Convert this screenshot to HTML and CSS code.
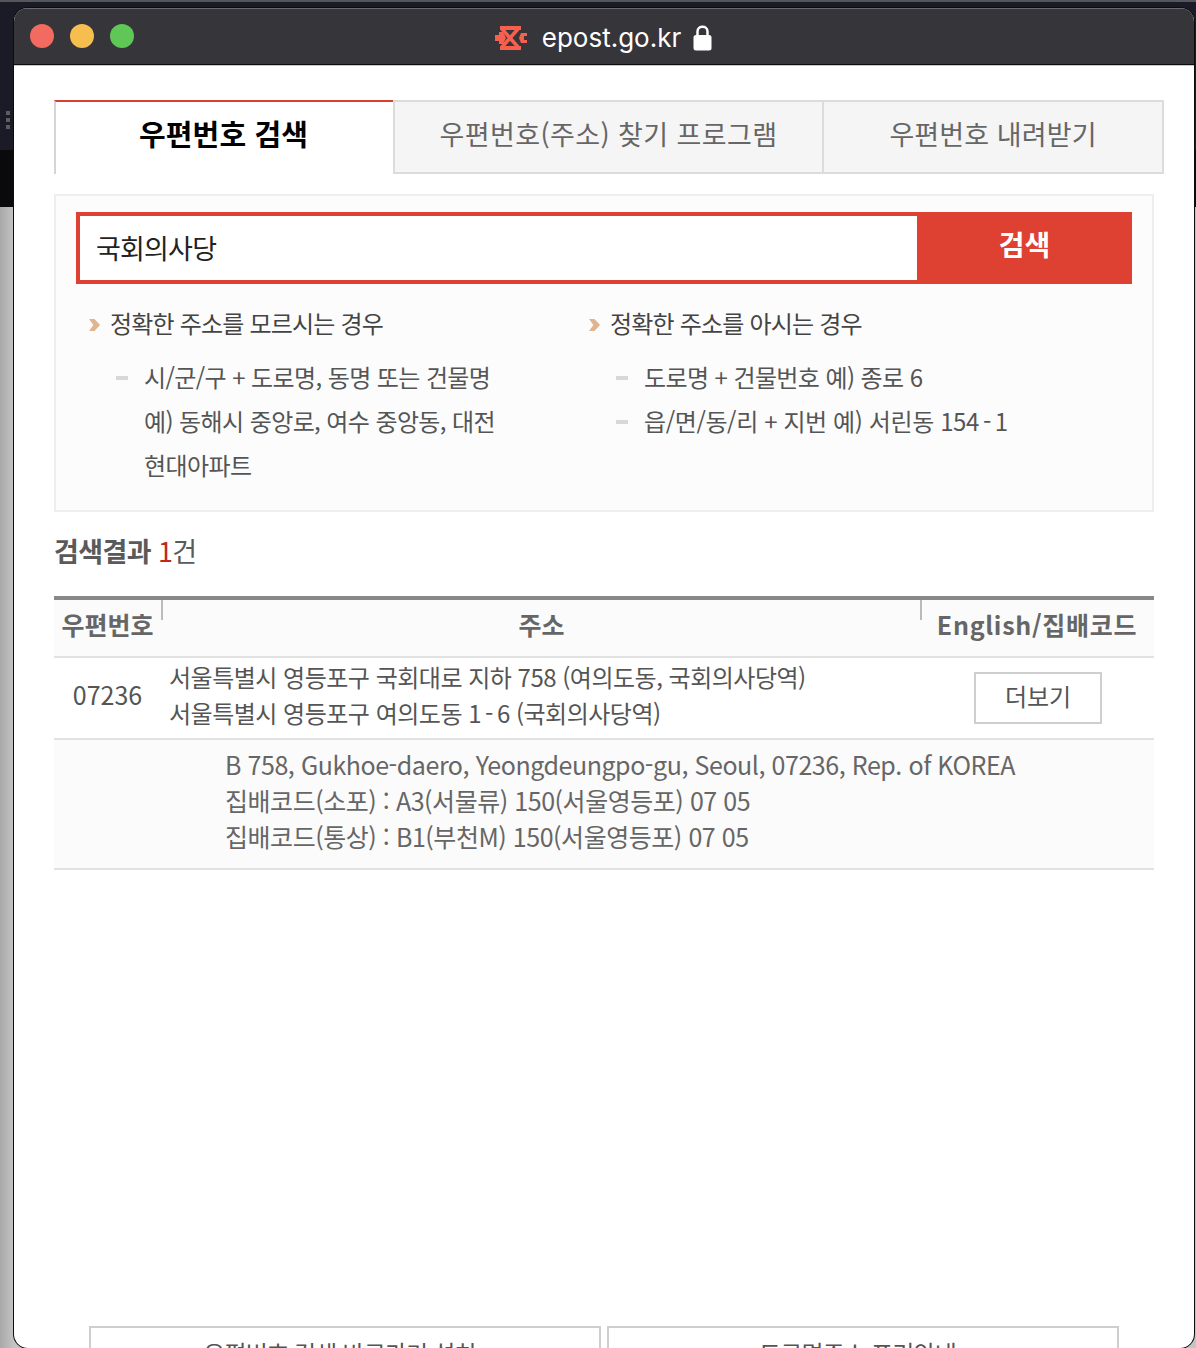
FILE: index.html
```html
<!DOCTYPE html>
<html lang="ko">
<head>
    <meta charset="UTF-8">
    <meta name="viewport" content="width=device-width, initial-scale=1.0">
    <title>epost.go.kr</title>
    <link rel="stylesheet" href="styles.css">
</head>
<body>
    <div class="desktop-top"></div>
    <div class="desktop-dots"><i></i><i></i><i></i></div>
    <div class="window">
        <div class="titlebar">
            <div class="lights">
                <span class="light red"></span>
                <span class="light yellow"></span>
                <span class="light green"></span>
            </div>
            <div class="site">
                <svg class="site-icon" width="32" height="24" viewBox="0 0 32 24">
                    <path fill="#f7604e" d="M5 0H26V4H5ZM5 20H26V24H5ZM0 9H6V15H0ZM26 7H32V10H29V14H32V17H26L24 12Z"/>
                    <path fill="none" stroke="#f7604e" stroke-width="3.500" d="M7 3L23 21M23 3L7 21"/>
                    <path fill="#f7604e" d="M4 6H8L11 12L8 18H4Z"/>
                </svg>
                <span class="site-name">epost.go.kr</span>
                <svg class="lock" width="19" height="27" viewBox="0 0 19 27">
                    <path fill="none" stroke="#fff" stroke-width="2.500" d="M4.500 12V7.500C4.500 1.200 14.500 1.200 14.500 7.500V12"/>
                    <rect x="0.500" y="11" width="18" height="15.500" rx="2.500" fill="#fff"/>
                </svg>
            </div>
        </div>

        <div class="content">
            <div class="tabs">
                <div class="tab active">우편번호 검색</div>
                <div class="tab second">우편번호(주소) 찾기 프로그램</div>
                <div class="tab third">우편번호 내려받기</div>
            </div>

            <div class="search-box">
                <div class="search">
                    <div class="search-input">국회의사당</div>
                    <div class="search-btn">검색</div>
                </div>
                <div class="tips">
                    <div class="tip-col">
                        <p class="tip-title">정확한 주소를 모르시는 경우</p>
                        <ul>
                            <li>시/군/구 + 도로명, 동명 또는 건물명<br>예) 동해시 중앙로, 여수 중앙동, 대전<br>현대아파트</li>
                        </ul>
                    </div>
                    <div class="tip-col">
                        <p class="tip-title">정확한 주소를 아시는 경우</p>
                        <ul>
                            <li>도로명 + 건물번호 예) 종로 6</li>
                            <li class="loose">읍/면/동/리 + 지번 예) 서린동 154<span class="dash">-</span>1</li>
                        </ul>
                    </div>
                </div>
            </div>

            <h2 class="result-title">검색결과 <em>1</em><span>건</span></h2>

            <div class="result">
                <div class="result-head">
                    <div class="col-zip">우편번호</div>
                    <div class="col-addr">주소</div>
                    <div class="col-more">English/집배코드</div>
                </div>
                <div class="result-row">
                    <div class="col-zip">07236</div>
                    <div class="col-addr">서울특별시 영등포구 국회대로 지하 758 (여의도동, 국회의사당역)<br>서울특별시 영등포구 여의도동 1<span class="dash">-</span>6 (국회의사당역)</div>
                    <div class="col-more"><span class="more-btn">더보기</span></div>
                </div>
                <div class="result-detail">B 758, Gukhoe-daero, Yeongdeungpo-gu, Seoul, 07236, Rep. of KOREA<br>집배코드(소포) : A3(서물류) 150(서울영등포) 07 05<br>집배코드(통상) : B1(부천M) 150(서울영등포) 07 05</div>
            </div>

            <div class="bottom-links">
                <div class="bottom-link">우편번호 검색 바로가기 설치</div>
                <div class="bottom-link">도로명주소 프리안내</div>
            </div>
        </div>
    </div>
</body>
</html>
```

FILE: styles.css
```css
html, body {
    margin: 0;
    padding: 0;
    height: 1348px;
    overflow: hidden;
}
body {
    position: relative;
    font-family: "Noto Sans CJK KR", "Noto Sans", sans-serif;
    background: linear-gradient(90deg, #a8a8a8, #c4c4c4 14px);
    color: #555;
}
.desktop-top {
    position: absolute;
    top: 0;
    left: 0;
    right: 0;
    height: 207px;
    background: linear-gradient(#1b1b27 0, #1b1b27 148px, #0a0a0d 148px);
    border-top: 2px solid #55555c;
    box-sizing: border-box;
}
.desktop-dots {
    position: absolute;
    top: 111px;
    left: 6px;
    display: flex;
    flex-direction: column;
    gap: 3px;
}
.desktop-dots i {
    display: block;
    width: 4px;
    height: 4px;
    background: #5d5d63;
}
.window {
    position: relative;
    margin: 8px 2px 0 14px;
    height: 1340px;
    background: #fff;
    border-radius: 14px;
    box-shadow: 0 0 0 1px #0c0c10;
    overflow: hidden;
}
.titlebar {
    position: relative;
    box-sizing: border-box;
    height: 57px;
    background: #35353a;
    border-top: 1px solid #6a6a6e;
    border-bottom: 1px solid #0c0c10;
    box-shadow: 0 1px 0 #c9c9c9;
    display: flex;
    align-items: center;
    justify-content: center;
}
.lights {
    position: absolute;
    left: 16px;
    top: 15px;
    display: flex;
    gap: 16px;
}
.light {
    width: 24px;
    height: 24px;
    border-radius: 50%;
}
.red { background: #f26a60; }
.yellow { background: #f6bd4f; }
.green { background: #5fc755; }
.site {
    display: flex;
    align-items: center;
    margin-left: -1px;
    margin-top: 2px;
}
.site-icon { margin-right: 15px; }
.site-name {
    font-family: "Inter", "Liberation Sans", sans-serif;
    font-size: 26px;
    line-height: 32px;
    color: #fff;
    margin-right: 12px;
}
.content {
    padding: 35px 40px 0 40px;
}
.tabs {
    display: flex;
    width: 1110px;
    height: 74px;
}
.tab {
    box-sizing: border-box;
    background: #f5f5f5;
    border: 2px solid #dcdcdc;
    border-left: 0;
    text-align: center;
    font-size: 27px;
    line-height: 64px;
    color: #666;
}
.tab.active {
    width: 339px;
    padding-right: 2px;
    background: #fff;
    border: 0;
    border-top: 2px solid #d8402f;
    border-left: 2px solid #d5d5d5;
    color: #000;
    font-size: 29px;
    font-weight: 700;
    line-height: 62px;
    letter-spacing: 0.1px;
}
.tab.second {
    width: 431px;
    border-left: 2px solid #dcdcdc;
    letter-spacing: 0.4px;
}
.tab.third {
    width: 340px;
    letter-spacing: 0.1px;
}
.search-box {
    box-sizing: border-box;
    width: 1100px;
    height: 318px;
    margin-top: 20px;
    padding: 16px 20px 0 20px;
    background: #fcfcfc;
    border: 2px solid #eeeeee;
}
.search {
    display: flex;
    height: 72px;
}
.search-input {
    box-sizing: border-box;
    width: 841px;
    border: 4px solid #de4131;
    border-right: 0;
    background: #fff;
    padding-left: 16px;
    font-size: 27px;
    line-height: 64px;
    color: #222;
    letter-spacing: -0.8px;
}
.search-btn {
    flex: 1;
    background: #de4131;
    color: #fff;
    font-size: 28px;
    font-weight: 700;
    text-align: center;
    line-height: 64px;
}
.tips {
    display: flex;
    padding-top: 17px;
    font-size: 24px;
    color: #555;
}
.tip-col {
    width: 500px;
}
.tip-title {
    position: relative;
    margin: 0 0 10px 0;
    padding-left: 34px;
    line-height: 44px;
    letter-spacing: -0.8px;
    color: #444;
}
.tip-title::before {
    content: "";
    position: absolute;
    left: 13px;
    top: 18px;
    width: 11px;
    height: 12px;
    background: #e0b48e;
    clip-path: polygon(0 0, 50% 0, 100% 50%, 50% 100%, 0 100%, 40% 50%);
}
.tips ul {
    list-style: none;
    margin: 0;
    padding: 0;
}
.tips li {
    position: relative;
    padding-left: 68px;
    line-height: 44px;
    letter-spacing: -0.6px;
}
.tips li.loose {
    letter-spacing: -0.4px;
}
.tips li::before {
    content: "";
    position: absolute;
    left: 40px;
    top: 21px;
    width: 12px;
    height: 4px;
    background: #d8d8d8;
}
.dash {
    margin: 0 4px;
}
.result-title {
    margin: 19px 0 0 0;
    font-size: 27px;
    line-height: 40px;
    font-weight: 700;
    letter-spacing: -0.6px;
    color: #5a5a5a;
}
.result-title em {
    font-style: normal;
    font-weight: 400;
    color: #c0281c;
}
.result-title span {
    font-weight: 400;
}
.result {
    width: 1100px;
    margin-top: 25px;
}
.result-head, .result-row {
    display: flex;
}
.result-head {
    box-sizing: border-box;
    height: 62px;
    background: #fbfbfb;
    border-top: 4px solid #888;
    border-bottom: 2px solid #e2e2e2;
    font-size: 25px;
    font-weight: 700;
    line-height: 48px;
    color: #666;
    text-align: center;
}
.result-head .col-addr, .result-head .col-more {
    position: relative;
}
.result-head .col-addr {
    padding-left: 2px;
    box-sizing: border-box;
}
.result-head .col-addr::before, .result-head .col-more::before {
    content: "";
    position: absolute;
    left: 0;
    top: 0;
    width: 2px;
    height: 20px;
    background: #bbb;
}
.col-zip {
    width: 107px;
    flex: none;
}
.col-addr {
    width: 759px;
    flex: none;
}
.col-more {
    flex: 1;
    letter-spacing: 0.7px;
}
.result-row {
    box-sizing: border-box;
    height: 82px;
    border-bottom: 2px solid #e2e2e2;
    align-items: center;
    font-size: 24px;
    color: #555;
}
.result-row .col-zip {
    box-sizing: border-box;
    padding-bottom: 8px;
    font-size: 25px;
    text-align: center;
}
.result-row .col-addr {
    box-sizing: border-box;
    padding: 0 0 6px 8px;
    line-height: 36px;
    letter-spacing: -0.5px;
}
.result-row .col-more {
    text-align: center;
    letter-spacing: 0;
}
.more-btn {
    display: inline-block;
    box-sizing: border-box;
    width: 128px;
    height: 52px;
    margin-left: 2px;
    border: 2px solid #cfcfcf;
    font-size: 24px;
    line-height: 44px;
}
.result-detail {
    box-sizing: border-box;
    height: 130px;
    padding: 6px 0 0 171px;
    background: #fbfbfb;
    border-bottom: 2px solid #e2e2e2;
    font-size: 25px;
    line-height: 36px;
    letter-spacing: -0.45px;
    color: #666;
}
.bottom-links {
    display: flex;
    gap: 6px;
    margin: 456px 0 0 35px;
}
.bottom-link {
    box-sizing: border-box;
    width: 512px;
    height: 60px;
    padding-right: 11px;
    border: 2px solid #cfcfcf;
    text-align: center;
    font-size: 24px;
    line-height: 50px;
    letter-spacing: -0.85px;
    color: #555;
}
```
